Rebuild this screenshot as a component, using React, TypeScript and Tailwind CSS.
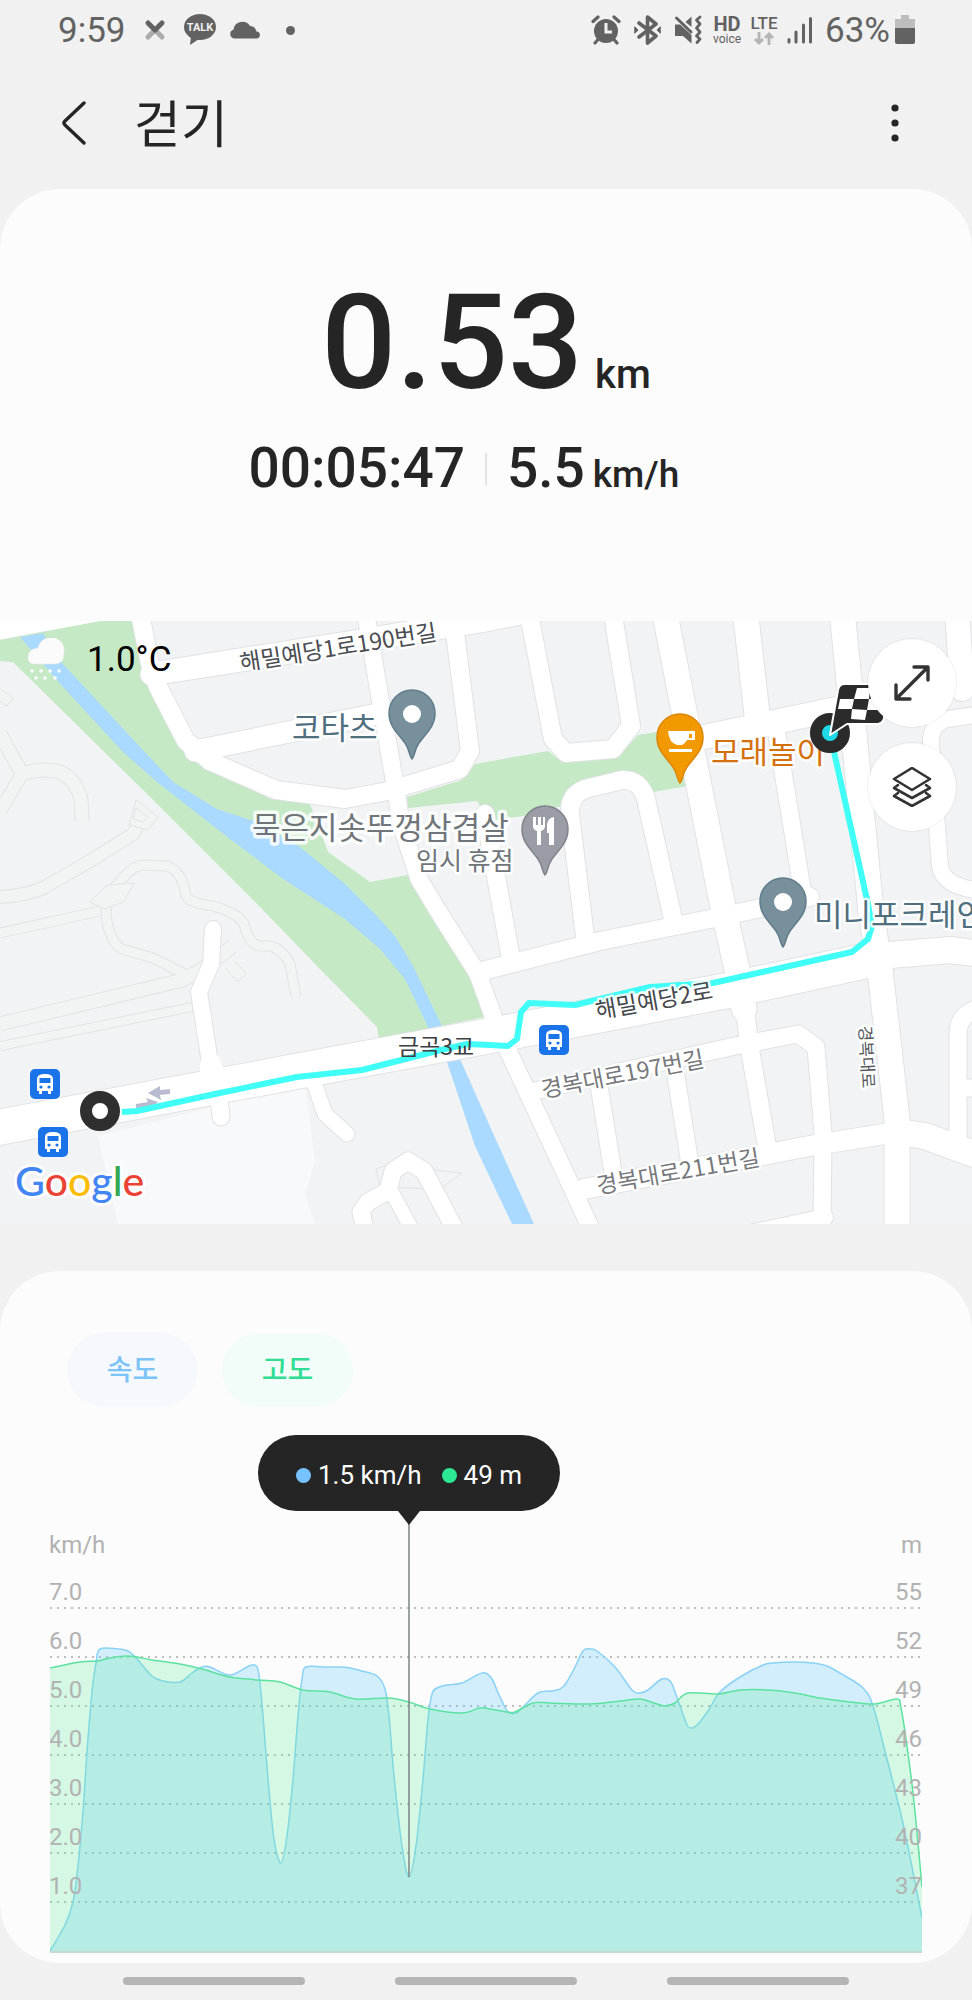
import React, { useState } from 'react';

type Point = [number, number];

interface Road {
  d: string;
  w: number;
}

const KR = '"Noto Sans CJK KR", sans-serif';

const BLOCK = '#f1f3f4';
const PARK = '#c5e8c5';
const WATER = '#aadaff';
const ROUTE = '#3ffff6';

const FOOTPATHS: Road[] = [
  { d: 'M0 735 L22 775 Q42 768 60 773 Q76 780 81 800 L82 822', w: 13 },
  { d: 'M22 775 L0 812', w: 12 },
  { d: 'M146 812 L133 835 L90 862 L45 888 Q30 896 0 898', w: 12 },
  { d: 'M100 905 L125 877 Q134 866 145 866 L168 867 Q183 874 186 897 Q190 904 213 907 Q238 914 244 925 Q250 948 262 947 Q280 945 290 965 L296 998', w: 9 },
  { d: 'M0 934 L100 912', w: 9 },
  { d: 'M106 908 Q106 940 122 950 L153 959 L187 976', w: 9 },
  { d: 'M0 1025 L183 981 L202 970 L232 948', w: 13 },
  { d: 'M0 1047 L192 1008', w: 8 },
];

const ROADS: Road[] = [
  { d: 'M139 610 L150 665 L158 688 L186 742 L210 762 L276 791 L345 800 L388 792 L460 770 L470 752 L452 610', w: 18 },
  { d: 'M152 675 L360 642 L480 622 L560 606', w: 23 },
  { d: 'M195 752 L378 715', w: 21 },
  { d: 'M365 610 L381 705 L395 785 L401 825 L419 880 L440 915 L478 975 L496 1025', w: 17 },
  { d: 'M505 1045 L593 1234', w: 17 },
  { d: 'M482 972 L600 942 L720 918 L810 898', w: 18 },
  { d: 'M-10 1130 L325 1067 L510 1033 L730 991 L865 962', w: 35 },
  { d: 'M865 960 L890 956 L950 951 L982 955', w: 26 },
  { d: 'M842 610 L871 913 L880 971 L897 1120 V1235', w: 25 },
  { d: 'M529 615 L553 740 L566 754 L613 750 L631 727 L612 610', w: 18 },
  { d: 'M664 610 L686 722 L699 787 L723 908 L738 975 L744 1010', w: 25 },
  { d: 'M744 1000 L749 1045 L768 1153', w: 18 },
  { d: 'M745 610 L757 715', w: 25 },
  { d: 'M690 741 L845 708 L972 680', w: 24 },
  { d: 'M957 610 L962 690', w: 24 },
  { d: 'M982 715 L948 720 Q930 724 931 745 L940 868 Q944 888 982 892', w: 16 },
  { d: 'M585 938 L570 815 Q569 796 585 790 L622 781 Q640 780 646 800 L673 920', w: 18 },
  { d: 'M485 815 L497 883 L511 960', w: 18 },
  { d: 'M776 730 L800 877 L804 900', w: 17 },
  { d: 'M530 1093 L735 1047 L798 1035 L816 1048 L823 1135 L822 1234', w: 17 },
  { d: 'M584 1190 L815 1146 L897 1133', w: 20 },
  { d: 'M897 1133 L925 1137 L982 1158', w: 26 },
  { d: 'M598 1080 L614 1180', w: 17 },
  { d: 'M674 1065 L690 1165', w: 17 },
  { d: 'M982 1008 Q958 1014 958 1035 V1142', w: 17 },
  { d: 'M958 1089 H982', w: 17 },
  { d: 'M740 1236 L825 1218', w: 16 },
  { d: 'M213 930 L211 965 L199 993 L211 1070', w: 16 },
  { d: 'M218 1090 L221 1118', w: 17 },
  { d: 'M311 1075 L325 1115 L347 1135', w: 15 },
  { d: 'M366 1234 L361 1213 L368 1203 L388 1192 L393 1172 L408 1162 L424 1172 L457 1234', w: 17 },
  { d: 'M391 1192 L414 1234', w: 14 },
];

const SPEED: Point[] = [
  [50, 1952], [65, 1926], [73, 1903], [78, 1867], [83, 1813], [87, 1753], [92, 1693], [96, 1664], [100, 1650],
  [118, 1650], [128, 1652], [137, 1660], [152, 1677], [163, 1682], [180, 1683], [192, 1674], [202, 1668],
  [210, 1668], [230, 1676], [247, 1668], [255, 1666], [259, 1676], [263, 1717], [268, 1780], [274, 1840],
  [281, 1864], [287, 1837], [293, 1780], [298, 1717], [302, 1680], [306, 1668], [323, 1668], [340, 1668],
  [350, 1669], [362, 1672], [377, 1677], [385, 1690], [389, 1717], [394, 1777], [402, 1847], [409, 1878],
  [416, 1847], [423, 1780], [428, 1720], [432, 1695], [437, 1689], [447, 1686], [462, 1684], [477, 1676],
  [485, 1674], [492, 1680], [500, 1698], [508, 1713], [516, 1714], [523, 1708], [538, 1694], [552, 1692],
  [563, 1688], [573, 1672], [583, 1652], [590, 1650], [597, 1652], [615, 1668], [632, 1691], [640, 1694],
  [648, 1691], [660, 1681], [667, 1680], [672, 1685], [680, 1707], [687, 1726], [692, 1729], [698, 1725],
  [708, 1712], [720, 1693], [740, 1678], [763, 1666], [773, 1664], [793, 1663], [813, 1664], [827, 1667],
  [845, 1677], [863, 1689], [873, 1707], [887, 1760], [902, 1820], [913, 1873], [922, 1919],
];

const ALTITUDE: Point[] = [
  [50, 1669], [80, 1663], [97, 1662], [110, 1659], [127, 1657], [137, 1658], [152, 1661], [180, 1665],
  [202, 1670], [230, 1678], [258, 1681], [280, 1683], [303, 1691], [330, 1693], [355, 1700], [388, 1699],
  [409, 1703], [430, 1710], [462, 1714], [480, 1709], [490, 1710], [508, 1713], [515, 1713], [533, 1704],
  [550, 1704], [590, 1705], [620, 1702], [640, 1700], [654, 1704], [665, 1707], [675, 1704], [688, 1694],
  [718, 1695], [740, 1691], [770, 1691], [795, 1694], [820, 1699], [850, 1703], [875, 1705], [897, 1700],
  [901, 1709], [907, 1747], [914, 1803], [922, 1888],
];

const SPEED_TICKS = ['7.0', '6.0', '5.0', '4.0', '3.0', '2.0', '1.0'];
const ALTITUDE_TICKS = ['55', '52', '49', '46', '43', '40', '37'];

const CHART = { left: 50, right: 922, top: 1436, bottom: 1953, firstTick: 1608, step: 49 };
const SELECTED_X = 409;

// Catmull-Rom spline through the samples
const smoothPath = (points: Point[]) => {
  let d = `M${points[0][0]} ${points[0][1]}`;
  for (let i = 0; i < points.length - 1; i++) {
    const p0 = points[i - 1] || points[i];
    const p1 = points[i];
    const p2 = points[i + 1];
    const p3 = points[i + 2] || p2;
    const c1 = [p1[0] + (p2[0] - p0[0]) / 6, p1[1] + (p2[1] - p0[1]) / 6];
    const c2 = [p2[0] - (p3[0] - p1[0]) / 6, p2[1] - (p3[1] - p1[1]) / 6];
    d += ` C${c1[0]} ${c1[1]} ${c2[0]} ${c2[1]} ${p2[0]} ${p2[1]}`;
  }
  return d;
};

const areaPath = (points: Point[]) =>
  `${smoothPath(points)} L${CHART.right} ${CHART.bottom} L${CHART.left} ${CHART.bottom} Z`;

const StatusBar: React.FC = () => (
  <div className="flex h-[60px] items-center justify-between pl-[58px] pr-[57px] text-[#626262]">
    <div className="flex items-center">
      <span className="text-[35px] leading-none">9:59</span>
      <svg className="ml-[18px] h-[22px] w-[22px]" viewBox="0 0 22 22" fill="none" strokeWidth="5" strokeLinecap="round" strokeLinejoin="round">
        <path d="M4 18 L11 11 L18 18" stroke="#ababab" />
        <path d="M4 4 L11 11 L18 4" stroke="#626262" />
      </svg>
      <svg className="ml-[18px] h-8 w-8" viewBox="0 0 32 32">
        <ellipse cx="16" cy="13" rx="16" ry="13" fill="#626262" />
        <path d="M7 22 L6 31 L15 25 Z" fill="#626262" />
        <text x="16" y="17" textAnchor="middle" fontSize="11" fontWeight="700" fill="#f1f1f1">TALK</text>
      </svg>
      <svg className="ml-[14px] h-[18px] w-[31px]" viewBox="0 0 31 18" fill="#626262">
        <path d="M5 17.500 A4.500 4.500 0 0 1 3.500 8.700 A9 9 0 0 1 20 5 Q25 5 26.500 10.500 A3.600 3.600 0 0 1 27.500 17.500 Z" />
      </svg>
      <span className="ml-[25px] h-[9px] w-[9px] rounded-full bg-[#626262]" />
    </div>

    <div className="flex items-center">
      <svg className="h-[30px] w-[30px]" viewBox="0 0 30 30">
        <circle cx="15" cy="16" r="12" fill="#626262" />
        <path d="M2 6.500 L7 2 M28 6.500 L23 2 M4 28 L7 24.500 M26 28 L23 24.500" stroke="#626262" strokeWidth="3.200" strokeLinecap="round" />
        <path d="M15 8 V17 H21" fill="none" stroke="#f1f1f1" strokeWidth="3" />
      </svg>
      <svg className="ml-[13px] h-[30px] w-[27px]" viewBox="0 0 27 30" fill="none" stroke="#626262" strokeWidth="3.600" strokeLinejoin="round" strokeLinecap="round">
        <path d="M5 8 L22 21 L13.500 28 V2 L22 9 L5 22" />
        <path d="M1 12 L4 15 L1 18 Z M26 12 L23 15 L26 18 Z" fill="#626262" strokeWidth="1" />
      </svg>
      <svg className="ml-[13px] h-[30px] w-7" viewBox="0 0 28 30">
        <path d="M1 9.500 H6 L17.500 20 V28.500 L9 21 H1 Z M11.500 7 L17.500 1.500 V12 Z" fill="#626262" />
        <path d="M2.500 3 L17 17" stroke="#626262" strokeWidth="3" strokeLinecap="round" />
        <path d="M26 2 L22.500 5 L26 9 L22.500 13 L26 17 L22.500 21 L26 24 L23 27.500" fill="none" stroke="#626262" strokeWidth="2.800" strokeLinecap="round" strokeLinejoin="round" />
      </svg>
      <div className="ml-[10px] flex w-[30px] flex-col items-center">
        <span className="text-[20px] font-bold leading-[17px]">HD</span>
        <span className="text-[12px] leading-[12px]">voice</span>
      </div>
      <div className="ml-[7px] flex w-[30px] flex-col items-center gap-[1px]">
        <span className="text-[17px] font-medium leading-[16px]">LTE</span>
        <svg className="h-[13px] w-5" viewBox="0 0 20 13" fill="none" stroke="#b4b4b4" strokeWidth="2.800">
          <path d="M5 0 V11 M1 7 L5 11 L9 7 M15 13 V2 M11 6 L15 2 L19 6" />
        </svg>
      </div>
      <svg className="ml-2 h-7 w-[26px]" viewBox="0 0 26 28" stroke="#626262" strokeWidth="3" strokeLinecap="round">
        <path d="M2 23.500 V26 M9 16 V26 M16.500 9 V26 M23.500 2.500 V26" />
      </svg>
      <span className="ml-3 text-[35px] leading-none">63%</span>
      <svg className="ml-[5px] h-[30px] w-5" viewBox="0 0 20 30">
        <path d="M6 0 H14 V4 H20 V14 H0 V4 H6 Z" fill="#bdbdbd" />
        <path d="M0 13 H20 V27 Q20 29 18 29 H2 Q0 29 0 27 Z" fill="#626262" />
      </svg>
    </div>
  </div>
);

const Header: React.FC = () => (
  <header className="flex h-[129px] items-start pl-[54px] pr-[57px] pt-[35px]">
    <button type="button" aria-label="뒤로" className="flex h-14 w-10 items-center justify-center">
      <svg className="h-11 w-6" viewBox="0 0 24 44" fill="none" stroke="#252525" strokeWidth="3.400" strokeLinecap="round" strokeLinejoin="round">
        <path d="M22 2 L3 20 Q1 22 3 24 L22 42" />
      </svg>
    </button>
    <h1 className="ml-10 text-[51px] leading-[62px] text-[#252525]">걷기</h1>
    <button type="button" aria-label="더보기" className="ml-auto flex h-14 w-10 items-center justify-center">
      <svg className="h-10 w-2" viewBox="0 0 8 40" fill="#252525">
        <circle cx="4" cy="5" r="3.600" />
        <circle cx="4" cy="20" r="3.600" />
        <circle cx="4" cy="35" r="3.600" />
      </svg>
    </button>
  </header>
);

const Summary: React.FC = () => (
  <section className="rounded-t-[60px] bg-[#fcfcfc] pb-[125px] pt-[88px] font-medium text-[#252525]">
    <div className="flex items-baseline justify-center gap-3">
      <span className="text-[132px] leading-none">0.53</span>
      <span className="text-[40px] leading-none">km</span>
    </div>
    <div className="mt-8 grid grid-cols-[1fr_auto_1fr] items-center gap-5">
      <span className="text-right text-[55px] leading-none">00:05:47</span>
      <span className="h-8 w-[2px] bg-[#e2e2e2]" />
      <span className="flex items-baseline gap-2">
        <span className="text-[55px] leading-none">5.5</span>
        <span className="text-[37px] leading-none">km/h</span>
      </span>
    </div>
  </section>
);

interface PinProps {
  x: number;
  y: number;
  fill: string;
  stroke: string;
  children: React.ReactNode;
}

// x, y is the tip of the pin; children are drawn round the centre of its head
const Pin: React.FC<PinProps> = ({ x, y, fill, stroke, children }) => (
  <g transform={`translate(${x} ${y})`}>
    <path d="M0 0 C-3 -3 -2 -9 -7 -16 C-14 -26 -23 -32 -23 -46 A23 23 0 0 1 23 -46 C23 -32 14 -26 7 -16 C2 -9 3 -3 0 0 Z" fill={fill} stroke={stroke} strokeWidth="1.500" />
    <g transform="translate(0 -45)">{children}</g>
  </g>
);

const BusStop: React.FC<{ x: number; y: number }> = ({ x, y }) => (
  <g transform={`translate(${x} ${y})`}>
    <rect x="-15" y="-15" width="30" height="30" rx="5" fill="#1a73e8" />
    <path d="M-8 -5 Q-8 -10 0 -10 Q8 -10 8 -5 V7 H6 V10 H3 V7 H-3 V10 H-6 V7 H-8 Z" fill="#fff" />
    <rect x="-5.500" y="-6" width="11" height="5" fill="#1a73e8" />
    <circle cx="-4" cy="3" r="1.600" fill="#1a73e8" />
    <circle cx="4" cy="3" r="1.600" fill="#1a73e8" />
  </g>
);

interface MapLabelProps {
  x: number;
  y: number;
  size?: number;
  color?: string;
  rotate?: number;
  halo?: number;
  children: React.ReactNode;
}

const MapLabel: React.FC<MapLabelProps> = ({ x, y, size = 23, color = '#55585c', rotate = 0, halo = 5, children }) => (
  <text
    transform={`translate(${x} ${y}) rotate(${rotate})`}
    fontFamily={KR}
    fontSize={size}
    fill={color}
    stroke="#fff"
    strokeOpacity="0.85"
    strokeWidth={halo}
    strokeLinejoin="round"
    paintOrder="stroke"
  >
    {children}
  </text>
);

const RouteMap: React.FC = () => (
  <section className="relative overflow-hidden">
    <svg className="block h-auto w-full" viewBox="0 622 972 603" role="img" aria-label="이동 경로">
      <rect x="0" y="622" width="972" height="603" fill={BLOCK} />
      <path d="M98 1137 L118 1225 H315 L305 1195 L315 1162 L305 1085 Z" fill="#f8f9fb" />

      {FOOTPATHS.map((p) => (
        <path key={p.d} d={p.d} fill="none" stroke="#e1e3e4" strokeWidth={p.w + 2} />
      ))}
      {FOOTPATHS.map((p) => (
        <path key={p.d} d={p.d} fill="none" stroke="#f2f3f3" strokeWidth={p.w} />
      ))}
      <path d="M136 801 L158 818 L148 831 L129 826 Z M136 809 L148 818 L143 823 L133 820 Z M0 690 L13 699 L7 707 L-2 701 M90 903 L107 886 L134 884 L124 903 L104 910 Z M225 969 L238 983 L246 974 L235 963" fill="#f2f3f3" stroke="#e1e3e4" />
      <path d="M376 1170 L388 1166 L462 1174 L440 1190 L380 1188 Z" fill={BLOCK} stroke="#e1e3e4" />

      <path d="M0 641 L100 622 H132 L145 680 L175 735 L195 757 L270 800 L310 805 L328 853 L370 883 L408 876 L440 925 L470 978 L484 1018 L379 1040 L377 1028 L320 970 L262 910 L142 790 L13 663 L0 662 Z" fill={PARK} />
      <path d="M407 798 L462 781 L475 765 L548 752 L562 763 L617 759 L638 736 L663 732 L680 760 L687 787 L654 793 L643 777 L622 772 L577 783 L562 807 L523 817 L490 822 L477 802 L408 809 Z" fill={PARK} />
      <path d="M20 638 L43 634 L63 665 L128 735 L173 783 L217 810 L253 822 L300 848 L345 885 L375 915 L395 937 L413 967 L442 1027 L460 1060 L492 1132 L534 1225 H512 L475 1147 L447 1063 L428 1028 L405 980 L380 950 L345 920 L283 880 L230 840 L157 783 L123 753 L63 688 Z" fill={WATER} />
      <path d="M0 622 H100 L0 640 Z" fill="#fff" />

      <g fill="none" strokeLinejoin="round" strokeLinecap="round">
        {ROADS.map((r) => (
          <path key={r.d} d={r.d} stroke="#e0e2e5" strokeWidth={r.w + 2} />
        ))}
        {ROADS.map((r) => (
          <path key={r.d} d={r.d} stroke="#fff" strokeWidth={r.w} />
        ))}
      </g>
      <path d="M203 1058 L218 1056 L226 1076 H200 V1064 Z" fill="#fff" />

      <path d="M148 1094 L160 1087 V1091 L170 1090 V1095 L160 1096 L161 1101 Z M136 1105 L148 1103 L146 1099 L158 1103 L150 1110 L136 1111 Z" fill="#b9bbd0" />

      <path
        d="M122 1113 L137 1112 L215 1095 L297 1078 L362 1071 L437 1052 L467 1045 L490 1046 L508 1047 L517 1040 L521 1013 L529 1004 L575 1006 L650 988 L713 984 L852 953 L868 940 L872 927 L868 905 L830 735"
        fill="none"
        stroke={ROUTE}
        strokeWidth="6"
        strokeLinejoin="round"
      />

      <MapLabel x={241} y={672} rotate={-9} color="#4a4d51">해밀예당1로190번길</MapLabel>
      <MapLabel x={292} y={740} size={31} color="#4f6f7e">코타츠</MapLabel>
      <MapLabel x={252} y={840} size={31} color="#70757a" halo={7}>묵은지솟뚜껑삼겹살</MapLabel>
      <MapLabel x={416} y={871} size={25} color="#70757a">임시 휴점</MapLabel>
      <MapLabel x={711} y={764} size={31} color="#d5700f">모래놀이</MapLabel>
      <MapLabel x={814} y={927} size={31} color="#4f6f7e">미니포크레인</MapLabel>
      <MapLabel x={597} y={1020} rotate={-10} color="#45484c">해밀예당2로</MapLabel>
      <MapLabel x={543} y={1099} rotate={-11} color="#77797c">경복대로197번길</MapLabel>
      <MapLabel x={598} y={1195} rotate={-10} color="#77797c">경복대로211번길</MapLabel>
      <MapLabel x={398} y={1056} color="#3c4043" halo={0}>금곡3교</MapLabel>
      <MapLabel x={859} y={1027} size={17} rotate={87}>경복대로</MapLabel>

      <Pin x={412} y={760} fill="#78909c" stroke="#607d8b">
        <circle r="9" fill="#fff" />
      </Pin>
      <Pin x={783} y={948} fill="#78909c" stroke="#607d8b">
        <circle r="9" fill="#fff" />
      </Pin>
      <Pin x={545} y={876} fill="#9a9da6" stroke="#80838c">
        <path d="M-12 -13 V-4 Q-12 0 -8 1 V15 H-4 V1 Q0 0 0 -4 V-13 H-2 V-5 H-4 V-13 H-7 V-5 H-9 V-13 Z M4 15 V3 H2 V-6 Q3 -12 9 -13 V15 Z" fill="#fff" />
      </Pin>
      <Pin x={680} y={784} fill="#f29900" stroke="#dd8500">
        <path d="M-12 -7 H15 V2 H7 Q4 7 1 7 H-3 Q-11 5 -12 -7 Z M-11 11 H12 V14 H-11 Z" fill="#fff" />
        <rect x="9" y="-4" width="3" height="4" fill="#f29900" />
      </Pin>

      <BusStop x={45} y={1085} />
      <BusStop x={53} y={1143} />
      <BusStop x={554} y={1041} />

      <circle cx="100" cy="1112" r="14" fill="#fff" stroke="#2f2f2f" strokeWidth="12" />

      <circle cx="830" cy="734" r="14" fill="#1fd8e8" stroke="#2b2b2b" strokeWidth="12" />
      <path d="M830 736 L838 691 Q839 685 845 685 H872 L884 716 Q885 724 878 725 H847 Z" fill="#2b2b2b" stroke="#fff" strokeWidth="2" strokeLinejoin="round" />
      <path d="M857 689 H870 L869 700 H854 Z M840 700 H854 L852 710 H838 Z M869 700 H880 L879 711 H867 Z M852 710 L867 711 L865 721 L851 720 Z" fill="#fff" />

      <text x="15" y="1197" fontFamily="Lato, sans-serif" fontSize="41" fontWeight="500" stroke="#fff" strokeOpacity="0.9" strokeWidth="6" strokeLinejoin="round" paintOrder="stroke">
        <tspan fill="#4285f4">G</tspan>
        <tspan fill="#ea4335">o</tspan>
        <tspan fill="#fbbc05">o</tspan>
        <tspan fill="#4285f4">g</tspan>
        <tspan fill="#34a853">l</tspan>
        <tspan fill="#ea4335">e</tspan>
      </text>
    </svg>

    <div className="absolute left-[27px] top-[17px] flex items-center gap-[22px]">
      <svg className="h-[42px] w-[38px]" viewBox="0 0 38 42" fill="#fff">
        <path d="M6 26 A6 6 0 0 1 1 19 Q1 11 11 10 A13 13 0 0 1 37 15 Q37 26 28 26 Z" fill="#fbfbfb" stroke="#e6ebe6" strokeWidth="0.600" />
        <g>
          <circle cx="5" cy="33" r="1.800" />
          <circle cx="14" cy="33" r="1.800" />
          <circle cx="23" cy="33" r="1.800" />
          <circle cx="32" cy="33" r="1.800" />
          <circle cx="9" cy="40" r="1.800" />
          <circle cx="18" cy="40" r="1.800" />
          <circle cx="28" cy="40" r="1.800" />
        </g>
      </svg>
      <span className="text-[35px] leading-none text-black">1.0°C</span>
    </div>

    <div className="absolute right-4 top-[18px] flex flex-col gap-4">
      <button type="button" aria-label="지도 확대" className="flex h-[88px] w-[88px] items-center justify-center rounded-full bg-white ring-1 ring-black/5">
        <svg className="h-9 w-9" viewBox="0 0 36 36" fill="none" stroke="#333" strokeWidth="3.400" strokeLinecap="round" strokeLinejoin="round">
          <path d="M3 33 L33 3 M20 2 H34 V15 M2 20 V34 H16" />
        </svg>
      </button>
      <button type="button" aria-label="지도 유형" className="flex h-[88px] w-[88px] items-center justify-center rounded-full bg-white ring-1 ring-black/5">
        <svg className="h-10 w-10" viewBox="0 0 40 40" fill="none" stroke="#333" strokeWidth="2.600" strokeLinecap="round" strokeLinejoin="round">
          <path d="M20 1 L38 12 L20 23 L2 12 Z" />
          <path d="M6 18 L2 21 L20 31 L38 21 L34 18" />
          <path d="M6 26 L2 29 L20 39 L38 29 L34 26" />
        </svg>
      </button>
    </div>
  </section>
);

const Chart: React.FC<{ showSpeed: boolean; showAltitude: boolean }> = ({ showSpeed, showAltitude }) => {
  const tooltipLeft = ((SELECTED_X - CHART.left) / (CHART.right - CHART.left)) * 100;

  return (
    <div className="relative mx-[50px] mt-7">
      <svg className="block h-auto w-full" viewBox="50 1436 872 518" role="img" aria-label="속도 및 고도 그래프">
        {SPEED_TICKS.map((tick, i) => (
          <line
            key={tick}
            x1={CHART.left + 1}
            x2={CHART.right}
            y1={CHART.firstTick + i * CHART.step + 1}
            y2={CHART.firstTick + i * CHART.step + 1}
            stroke="#a8a8a8"
            strokeWidth="2"
            strokeDasharray="0 7"
            strokeLinecap="round"
          />
        ))}
        {showSpeed && (
          <>
            <path d={areaPath(SPEED)} fill="#55c5fc" fillOpacity="0.25" />
            <path d={smoothPath(SPEED)} fill="none" stroke="#8ad2f5" strokeWidth="1.500" />
          </>
        )}
        {showAltitude && (
          <>
            <path d={areaPath(ALTITUDE)} fill="#61eda1" fillOpacity="0.25" />
            <path d={smoothPath(ALTITUDE)} fill="none" stroke="#5ce2a0" strokeWidth="1.500" />
          </>
        )}
        <path d="M50 1953 H922" stroke="#c4d9d4" strokeWidth="2" />
        <g fontSize="24" fill="#b2b2b2">
          <text x="49" y="1554">km/h</text>
          <text x="922" y="1554" textAnchor="end">m</text>
          {SPEED_TICKS.map((tick, i) => (
            <text key={tick} x="49" y={1601 + i * CHART.step}>{tick}</text>
          ))}
          {ALTITUDE_TICKS.map((tick, i) => (
            <text key={tick} x="922" y={1601 + i * CHART.step} textAnchor="end">{tick}</text>
          ))}
        </g>
        <path d={`M${SELECTED_X} 1512 V1878`} stroke="#7d8582" strokeWidth="1.500" />
      </svg>

      <div
        className="absolute top-0 flex h-[76px] -translate-x-1/2 items-center whitespace-nowrap rounded-full bg-[#252525] px-[38px] pt-1 text-[26px] leading-none text-white"
        style={{ left: `${tooltipLeft}%` }}
      >
        <span className="mr-[7px] h-[15px] w-[15px] rounded-full bg-[#76c3ff]" />
        1.5 km/h
        <span className="ml-5 mr-[7px] h-[15px] w-[15px] rounded-full bg-[#2ce895]" />
        49 m
        <svg className="absolute left-1/2 top-full h-[14px] w-6 -translate-x-1/2" viewBox="0 0 24 14" fill="#252525">
          <path d="M1 0 H23 L12 14 Z" />
        </svg>
      </div>
    </div>
  );
};

const ChartCard: React.FC = () => {
  const [showSpeed, setShowSpeed] = useState(true);
  const [showAltitude, setShowAltitude] = useState(true);

  return (
    <section className="mt-[47px] rounded-[60px] bg-[#fcfcfc] pb-[10px] pt-[62px]">
      <div className="flex gap-6 px-[67px]">
        <button
          type="button"
          aria-pressed={showSpeed}
          onClick={() => setShowSpeed(!showSpeed)}
          className="h-[74px] w-[131px] rounded-full bg-[#f5f9fd] pt-[2px] text-[28px] font-medium text-[#7cc3f7]"
        >
          속도
        </button>
        <button
          type="button"
          aria-pressed={showAltitude}
          onClick={() => setShowAltitude(!showAltitude)}
          className="h-[74px] w-[131px] rounded-full bg-[#f2fcf9] pt-[2px] text-[28px] font-medium text-[#31dd94]"
        >
          고도
        </button>
      </div>
      <Chart showSpeed={showSpeed} showAltitude={showAltitude} />
    </section>
  );
};

const App: React.FC = () => {
  return (
    <div className="min-h-screen bg-[#f1f1f1] font-[Roboto,'Noto_Sans_CJK_KR',sans-serif]">
      <StatusBar />
      <Header />
      <main>
        <Summary />
        <RouteMap />
        <ChartCard />
      </main>
      <nav className="flex h-9 items-center justify-center gap-[90px]">
        <button type="button" aria-label="최근 앱" className="h-2 w-[182px] rounded-full bg-[#b5b5b5]" />
        <button type="button" aria-label="홈" className="h-2 w-[182px] rounded-full bg-[#b5b5b5]" />
        <button type="button" aria-label="이전" className="h-2 w-[182px] rounded-full bg-[#b5b5b5]" />
      </nav>
    </div>
  );
};

export default App;
